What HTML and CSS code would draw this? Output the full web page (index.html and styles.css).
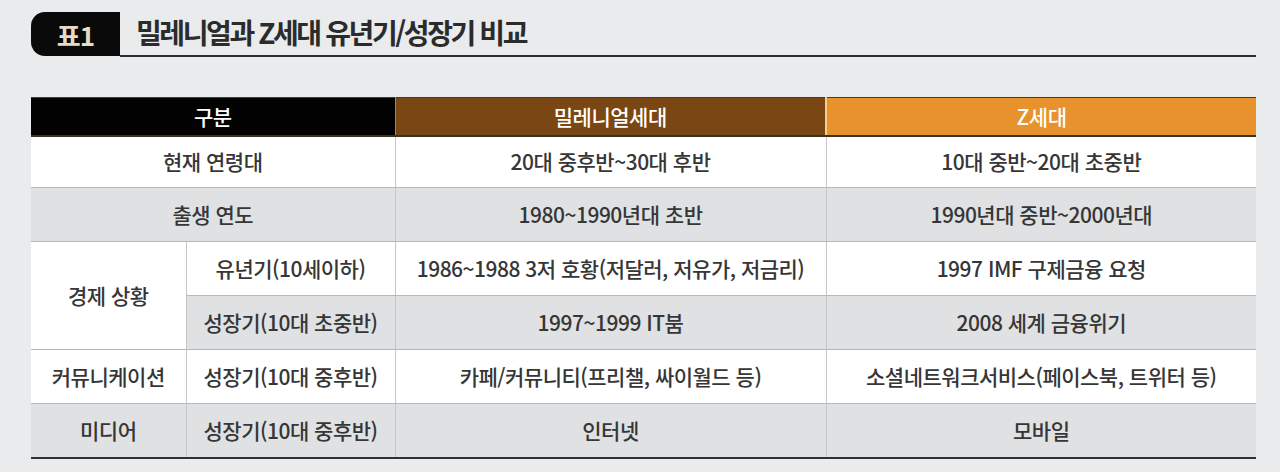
FILE: index.html
```html
<!DOCTYPE html>
<html lang="ko">
<head>
<meta charset="utf-8">
<title>밀레니얼과 Z세대 유년기/성장기 비교</title>
<link rel="stylesheet" href="styles.css">
</head>
<body>
<div class="page">
  <div class="title-row">
    <div class="badge">표1</div>
    <h1 class="title">밀레니얼과 Z세대 유년기/성장기 비교</h1>
  </div>
  <table class="cmp">
    <colgroup>
      <col class="c1"><col class="c2"><col class="c3"><col class="c4">
    </colgroup>
    <thead>
      <tr>
        <th colspan="2" class="h-black">구분</th>
        <th class="h-brown">밀레니얼세대</th>
        <th class="h-orange">Z세대</th>
      </tr>
    </thead>
    <tbody>
      <tr class="r1 white">
        <td colspan="2">현재 연령대</td>
        <td>20대 중후반~30대 후반</td>
        <td>10대 중반~20대 초중반</td>
      </tr>
      <tr class="r grey">
        <td colspan="2">출생 연도</td>
        <td>1980~1990년대 초반</td>
        <td>1990년대 중반~2000년대</td>
      </tr>
      <tr class="r white">
        <td rowspan="2" class="white-cell">경제 상황</td>
        <td>유년기(10세이하)</td>
        <td>1986~1988 3저 호황(저달러, 저유가, 저금리)</td>
        <td>1997 IMF 구제금융 요청</td>
      </tr>
      <tr class="r grey">
        <td>성장기(10대 초중반)</td>
        <td>1997~1999 IT붐</td>
        <td>2008 세계 금융위기</td>
      </tr>
      <tr class="r white">
        <td>커뮤니케이션</td>
        <td>성장기(10대 중후반)</td>
        <td>카페/커뮤니티(프리챌, 싸이월드 등)</td>
        <td>소셜네트워크서비스(페이스북, 트위터 등)</td>
      </tr>
      <tr class="r grey last">
        <td>미디어</td>
        <td>성장기(10대 중후반)</td>
        <td>인터넷</td>
        <td>모바일</td>
      </tr>
    </tbody>
  </table>
</div>
</body>
</html>
```
FILE: styles.css
```css
* { box-sizing: border-box; }
html, body {
  margin: 0;
  padding: 0;
  background: #e9ebed;
}
body {
  font-family: "Noto Sans CJK KR", "Noto Sans", sans-serif;
  color: #333;
}
.page {
  padding: 12px 24px 0 31px;
}
.title-row {
  display: flex;
  align-items: stretch;
  height: 44px;
}
.badge {
  width: 89px;
  background: #0a0a0a;
  color: #e6dcc4;
  border-radius: 14px 0 0 14px;
  font-size: 26px;
  font-weight: 700;
  display: flex;
  align-items: center;
  justify-content: center;
  letter-spacing: -1px;
  padding-top: 1px;
}
.title {
  flex: 1;
  margin: 0;
  padding-left: 16px;
  font-size: 28px;
  font-weight: 700;
  color: #2b2b2b;
  letter-spacing: -2.4px;
  border-bottom: 2px solid #2a2f33;
  line-height: 40px;
  height: 45px;
}
.cmp {
  margin-top: 41px;
  width: 1225px;
  table-layout: fixed;
  border-collapse: collapse;
  font-size: 21px;
  font-weight: 500;
  letter-spacing: -0.5px;
  color: #363636;
}
.c1 { width: 155px; }
.c2 { width: 209px; }
.c3 { width: 431px; }
.c4 { width: 430px; }
.cmp th {
  height: 38px;
  padding: 0;
  color: #fff;
  font-weight: 500;
  font-size: 21px;
  border-top: 1px solid #3c3c3c;
  border-bottom: 2px solid #3a3024;
  line-height: 1;
}
.h-black { background: #020202; border-right: 1px solid #8a8a8a; }
.h-brown { background: #7a4613; border-right: 2px solid #f1cf8c; }
.h-orange { background: #e8922e; }
.cmp td {
  padding: 0;
  text-align: center;
  border-bottom: 1px solid #b4b8bc;
  border-right: 1px solid #c4c6c8;
  line-height: 1;
}
.cmp td:last-child { border-right: none; }
.r1 td { height: 52px; }
.r td { height: 54px; }
.white td { background: #ffffff; }
.grey td { background: #dfe1e3; }
.grey td.white-cell { background: #ffffff; }
.white-cell { background: #ffffff; }
.last td { border-bottom: 2px solid #2e3134; }
```
